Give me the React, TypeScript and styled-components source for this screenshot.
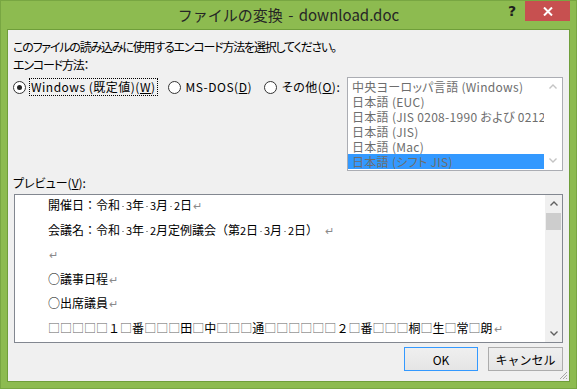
import styled, { createGlobalStyle } from "styled-components";

const GlobalStyle = createGlobalStyle`
  html, body {
    margin: 0;
    padding: 0;
  }
  body {
    width: 577px;
    height: 389px;
    overflow: hidden;
    font-family: "Noto Sans CJK JP", "Liberation Sans", sans-serif;
  }
`;

const encodings = [
  "中央ヨーロッパ言語 (Windows)",
  "日本語 (EUC)",
  "日本語 (JIS 0208-1990 および 0212)",
  "日本語 (JIS)",
  "日本語 (Mac)",
  "日本語 (シフト JIS)",
];

const Chevron = ({ dir, color }: { dir: "up" | "down"; color: string }) => (
  <svg width="8" height="5" viewBox="0 0 8 5">
    <path
      d={dir === "up" ? "M0.5 4.5 L4 1 L7.5 4.5" : "M0.5 0.5 L4 4 L7.5 0.5"}
      fill="none"
      stroke={color}
      strokeWidth="1.4"
    />
  </svg>
);

// full-width space marks in the preview are drawn as grey boxes
const renderBlanks = (text: string) =>
  Array.from(text).map((ch, i) =>
    ch === "□" ? <Blank key={i}>□</Blank> : <span key={i}>{ch}</span>
  );

export default function App() {
  return (
    <>
      <GlobalStyle />
      <Window>
        <TitleBar>
          <span />
          <Title>ファイルの変換 - download.doc</Title>
          <Controls>
            <HelpButton>?</HelpButton>
            <CloseButton>
              <svg width="10" height="9" viewBox="0 0 10 9">
                <path d="M1 0.5 L9 8.5 M9 0.5 L1 8.5" stroke="#fff" strokeWidth="2" />
              </svg>
            </CloseButton>
          </Controls>
        </TitleBar>

        <Client>
          <Line18>このファイルの読み込みに使用するエンコード方法を選択してください。</Line18>
          <Line18>エンコード方法：</Line18>

          <EncodingRow>
            <RadioGroup>
              <RadioOption>
                <RadioCircle $checked />
                <RadioLabel $focused>
                  Windows (既定値)(<u>W</u>)
                </RadioLabel>
              </RadioOption>
              <RadioOption>
                <RadioCircle />
                <RadioLabel>
                  MS-DOS(<u>D</u>)
                </RadioLabel>
              </RadioOption>
              <RadioOption>
                <RadioCircle />
                <RadioLabel>
                  その他(<u>O</u>):
                </RadioLabel>
              </RadioOption>
            </RadioGroup>

            <ListBox>
              <ListItems>
                {encodings.map((e, i) => (
                  <ListItem key={e} $selected={i === encodings.length - 1}>
                    {e}
                  </ListItem>
                ))}
              </ListItems>
              <ListScroll>
                <Chevron dir="up" color="#c4c4c4" />
                <Chevron dir="down" color="#c4c4c4" />
              </ListScroll>
            </ListBox>
          </EncodingRow>

          <PreviewLabel>
            プレビュー(<u>V</u>):
          </PreviewLabel>

          <PreviewBox>
            <PreviewText>
              <DocLine>
                開催日：令和<Sp /><Hw>3</Hw>年<Sp /><Hw>3</Hw>月<Sp /><Hw>2</Hw>日<Ret>↵</Ret>
              </DocLine>
              <DocLine>
                会議名：令和<Sp /><Hw>3</Hw>年<Sp /><Hw>2</Hw>月定例議会（第<Hw>2</Hw>日<Sp />
                <Hw>3</Hw>月<Sp /><Hw>2</Hw>日）<Gap />
                <Ret>↵</Ret>
              </DocLine>
              <DocLine>
                <Ret>↵</Ret>
              </DocLine>
              <DocLine>
                ○議事日程<Ret>↵</Ret>
              </DocLine>
              <DocLine>
                ○出席議員<Ret>↵</Ret>
              </DocLine>
              <DocLine>
                {renderBlanks("□□□□□１□番□□□田□中□□□通□□□□□□２□番□□□桐□生□常□朗")}
                <Ret>↵</Ret>
              </DocLine>
            </PreviewText>
            <ScrollBar>
              <ArrowCell>
                <Chevron dir="up" color="#606060" />
              </ArrowCell>
              <Thumb />
              <ArrowCell>
                <Chevron dir="down" color="#606060" />
              </ArrowCell>
            </ScrollBar>
          </PreviewBox>

          <ButtonRow>
            <DialogButton $default>OK</DialogButton>
            <DialogButton>キャンセル</DialogButton>
          </ButtonRow>

          <SizeGrip>
            <svg width="8" height="8" viewBox="0 0 8 8">
              <path d="M8 1 L1 8 M8 4 L4 8 M8 7 L7 8" stroke="#a6a6a6" strokeWidth="1" />
            </svg>
          </SizeGrip>
        </Client>
      </Window>
    </>
  );
}

const Window = styled.div`
  box-sizing: border-box;
  width: 577px;
  height: 389px;
  background: #8dbb50;
  border: 1px solid #78a642;
  display: flex;
  flex-direction: column;
`;

const TitleBar = styled.div`
  flex: none;
  height: 28px;
  display: grid;
  grid-template-columns: 1fr auto 1fr;
`;

const Title = styled.div`
  font-size: 15px;
  line-height: 28px;
  color: #262626;
  white-space: nowrap;
  word-spacing: 2px;
`;

const Controls = styled.div`
  justify-self: end;
  display: flex;
  align-items: flex-start;
  margin-right: 6px;
`;

const HelpButton = styled.div`
  width: 26px;
  height: 20px;
  display: flex;
  align-items: center;
  justify-content: center;
  font: bold 14px "DejaVu Sans", sans-serif;
  color: #1e1e1e;
`;

const CloseButton = styled.div`
  width: 45px;
  height: 20px;
  background: #c75050;
  display: flex;
  align-items: center;
  justify-content: center;
`;

const Client = styled.div`
  position: relative;
  flex: 1;
  margin: 0 6px 6px;
  padding: 8px 6px 0 5px;
  background: #f0f0f0;
  border: 1px solid #6f9e3a;
  display: flex;
  flex-direction: column;
  font-size: 12px;
  color: #000;
  font-feature-settings: "palt";
`;

const Line18 = styled.div`
  height: 18px;
  line-height: 18px;
  white-space: nowrap;
  letter-spacing: -1.2px;
`;

const EncodingRow = styled.div`
  margin-top: 3px;
  display: flex;
  justify-content: space-between;
  align-items: flex-start;
`;

const RadioGroup = styled.div`
  margin-top: 1px;
  display: flex;
  align-items: center;
  gap: 10px;
  height: 18px;
`;

const RadioOption = styled.label`
  display: flex;
  align-items: center;
  gap: 3px;
`;

const RadioCircle = styled.span<{ $checked?: boolean }>`
  box-sizing: border-box;
  width: 13px;
  height: 13px;
  border-radius: 50%;
  border: 1px solid #333;
  background: #fff;
  display: inline-flex;
  align-items: center;
  justify-content: center;
  &::after {
    content: "";
    width: 5px;
    height: 5px;
    border-radius: 50%;
    background: #222;
    display: ${(p) => (p.$checked ? "block" : "none")};
  }
`;

const RadioLabel = styled.span<{ $focused?: boolean }>`
  box-sizing: border-box;
  height: 18px;
  line-height: 16px;
  padding: 0 1px;
  letter-spacing: 0.5px;
  border: 1px dotted ${(p) => (p.$focused ? "#000" : "transparent")};
  white-space: nowrap;
`;

const ListBox = styled.div`
  box-sizing: border-box;
  width: 216px;
  height: 94px;
  border: 1px solid #abadb3;
  background: #fff;
  display: flex;
`;

const ListItems = styled.div`
  flex: 1;
  min-width: 0;
  padding: 1px 0;
  overflow: hidden;
`;

const ListItem = styled.div<{ $selected?: boolean }>`
  height: 15px;
  line-height: 15px;
  padding-left: 4px;
  overflow: hidden;
  white-space: nowrap;
  letter-spacing: 0.3px;
  color: #6d6d6d;
  background: ${(p) => (p.$selected ? "#3399ff" : "transparent")};
`;

const ListScroll = styled.div`
  width: 18px;
  flex: none;
  display: flex;
  flex-direction: column;
  justify-content: space-between;
  align-items: center;
  padding: 6px 0 7px;
`;

const PreviewLabel = styled(Line18)`
  margin-top: 3px;
  letter-spacing: 0;
`;

const PreviewBox = styled.div`
  box-sizing: border-box;
  margin: 2px 0 0 1px;
  height: 149px;
  border: 1px solid #828790;
  background: #fff;
  display: flex;
`;

const PreviewText = styled.div`
  flex: 1;
  min-width: 0;
  padding-left: 33px;
  overflow: hidden;
  font-feature-settings: normal;
`;

const DocLine = styled.div`
  height: 24.6px;
  line-height: 19px;
  white-space: nowrap;
`;

const Hw = styled.span`
  display: inline-block;
  width: 6px;
  text-align: center;
  font-size: 11px;
`;

const Sp = styled.span`
  display: inline-block;
  width: 6px;
  height: 10px;
  position: relative;
  &::after {
    content: "";
    position: absolute;
    left: 2px;
    bottom: 3px;
    width: 2px;
    height: 1px;
    background: #9a9a9a;
  }
`;

const Gap = styled.span`
  display: inline-block;
  width: 6px;
`;

const Ret = styled.span`
  color: #8a8a8a;
  font-size: 11px;
  margin-left: 1px;
`;

const Blank = styled.span`
  color: #666;
`;

const ScrollBar = styled.div`
  width: 17px;
  flex: none;
  background: #f0f0f0;
  display: flex;
  flex-direction: column;
`;

const ArrowCell = styled.div`
  height: 17px;
  display: flex;
  align-items: center;
  justify-content: center;
`;

const Thumb = styled.div`
  margin: 1px 1px 0;
  height: 17px;
  background: #cdcdcd;
  flex: none;
  & + ${ArrowCell} {
    margin-top: auto;
  }
`;

const ButtonRow = styled.div`
  margin-top: 4px;
  display: flex;
  justify-content: flex-end;
  gap: 10px;
`;

const DialogButton = styled.button<{ $default?: boolean }>`
  box-sizing: border-box;
  width: ${(p) => (p.$default ? "74px" : "75px")};
  height: 24px;
  padding: 0;
  font-family: inherit;
  font-size: 12px;
  color: #000;
  background: linear-gradient(#efefef, #e5e5e5);
  border: 1px solid ${(p) => (p.$default ? "#3399ff" : "#acacac")};
  border-radius: 0;
`;

const SizeGrip = styled.div`
  position: absolute;
  right: 2px;
  bottom: 2px;
  width: 8px;
  height: 8px;
  line-height: 0;
`;
